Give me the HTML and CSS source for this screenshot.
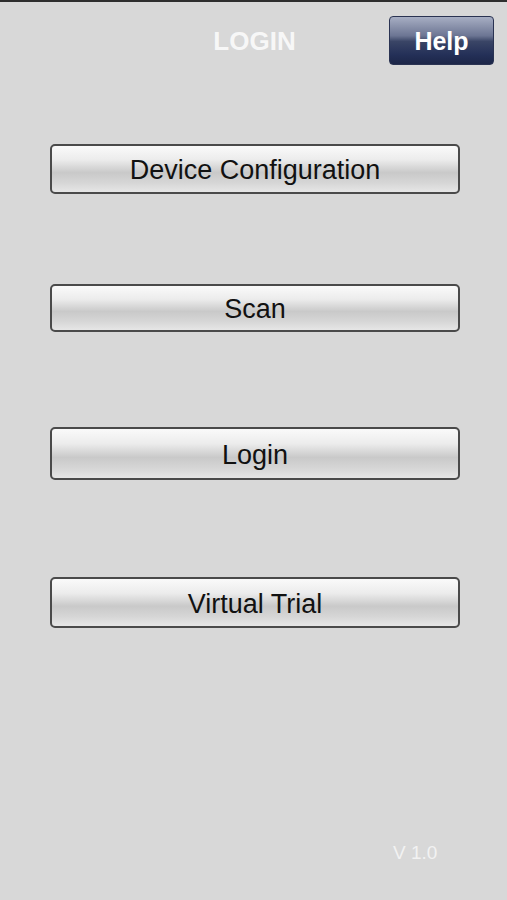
FILE: index.html
```html
<!DOCTYPE html>
<html>
<head>
<meta charset="utf-8">
<link rel="stylesheet" href="styles.css">
</head>
<body>
<div class="screen">
	<header class="topbar">
		<h1 class="title">LOGIN</h1>
		<button class="help">Help</button>
	</header>

	<nav class="menu">
		<button class="menu-btn btn-device">Device Configuration</button>
		<button class="menu-btn btn-scan">Scan</button>
		<button class="menu-btn btn-login">Login</button>
		<button class="menu-btn btn-trial">Virtual Trial</button>
	</nav>

	<footer class="version">V 1.0</footer>
</div>
</body>
</html>
```

FILE: styles.css
```css
html, body {margin:0;
	padding:0;}
body {background-color:#d8d8d8;
	font-family:"Liberation Sans", Arial, sans-serif;}
.screen {height:898px;
	border-top:2px solid #2e2e2e;
	position:relative;}
.topbar {height:62px;
	display:flex;
	justify-content:center;
	align-items:center;
	position:relative;}
.title {margin:0;
	font-size:26px;
	font-weight:bold;
	color:#f7f7f7;
	padding-top:16px;
	padding-left:2px;}
.help {position:absolute;
	left:389px;
	top:14px;
	width:105px;
	height:49px;
	border:1px solid #2a3352;
	border-radius:4px;
	background:linear-gradient(#a7aec3 0%, #6c7593 40%, #3a4566 52%, #243058 80%, #1c2648 100%);
	color:#fff;
	font-family:"Liberation Sans", Arial, sans-serif;
	font-size:25px;
	font-weight:bold;
	padding:2px 0 0 0;}
.menu {display:flex;
	flex-direction:column;
	padding-left:50px;}
.menu-btn {width:410px;
	border:2px solid #4a4a4a;
	border-radius:5px;
	background:linear-gradient(#fafafa 0%, #ececec 30%, #c9c9c9 58%, #d6d6d6 80%, #e6e6e6 100%);
	font-family:"Liberation Sans", Arial, sans-serif;
	font-size:27px;
	color:#111;
	padding:3px 0 0 0;}
.btn-device {margin-top:80px;
	height:50px;}
.btn-scan {margin-top:90px;
	height:48px;}
.btn-login {margin-top:95px;
	height:53px;}
.btn-trial {margin-top:97px;
	height:51px;}
.version {position:absolute;
	left:393px;
	top:840px;
	font-size:19px;
	color:#f2f2f2;}
```
